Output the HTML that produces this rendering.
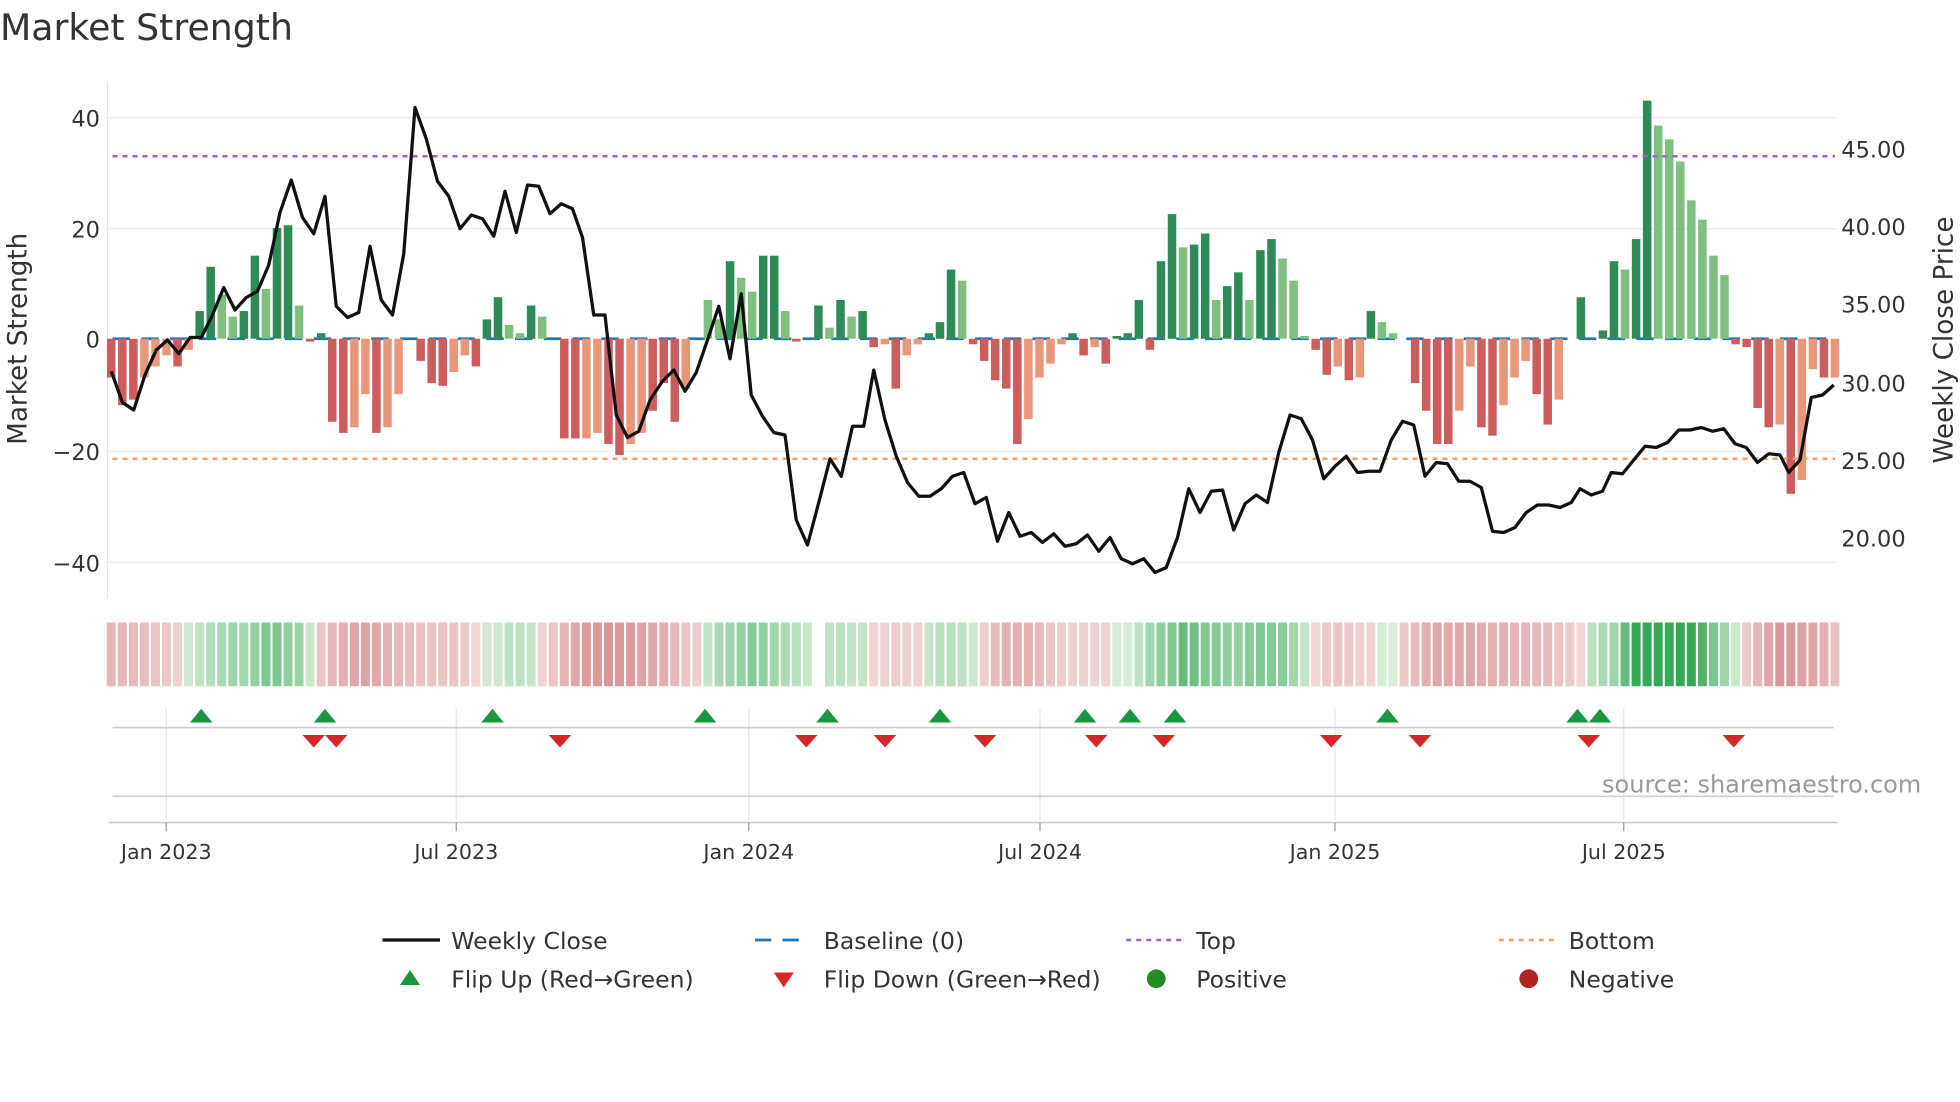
<!DOCTYPE html>
<html><head><meta charset="utf-8"><style>
html,body{margin:0;padding:0;background:#fff;width:1960px;height:1102px;overflow:hidden}
svg{display:block}
text{font-family:"DejaVu Sans","Liberation Sans",sans-serif}
</style></head><body>
<svg id="s" width="1960" height="1102" viewBox="0 0 1568 881.6" xmlns="http://www.w3.org/2000/svg">
<text x="0" y="32" font-size="29" fill="#333">Market Strength</text>
<g stroke="#ececf0" stroke-width="1">
<line x1="86" y1="94" x2="1470" y2="94"/><line x1="86" y1="183" x2="1470" y2="183"/>
<line x1="86" y1="361" x2="1470" y2="361"/><line x1="86" y1="450" x2="1470" y2="450"/>
</g>
<line x1="86" y1="65" x2="86" y2="478" stroke="#e4e4e4"/>
<g font-size="18" fill="#333" text-anchor="end">
<text x="80" y="101">40</text><text x="80" y="190">20</text><text x="80" y="278">0</text>
<text x="80" y="368">−20</text><text x="80" y="457">−40</text>
</g>
<g font-size="18" fill="#333">
<text x="1473" y="126">45.00</text><text x="1473" y="188">40.00</text><text x="1473" y="250">35.00</text>
<text x="1473" y="313">30.00</text><text x="1473" y="375">25.00</text><text x="1473" y="437">20.00</text>
</g>
<text transform="translate(21,271) rotate(-90)" font-size="21" fill="#333" text-anchor="middle">Market Strength</text>
<text transform="translate(1562,272) rotate(-90)" font-size="21" fill="#333" text-anchor="middle">Weekly Close Price</text>
<line x1="90" y1="271" x2="1468" y2="271" stroke="#1f77b4" stroke-width="2.2" stroke-dasharray="14 9"/>
<g id="bars"></g>
<line x1="90" y1="125" x2="1468" y2="125" stroke="#9b5fd6" stroke-width="2" stroke-dasharray="4 4"/>
<line x1="90" y1="367" x2="1468" y2="367" stroke="#f0a060" stroke-width="2" stroke-dasharray="4 4"/>
<polyline id="ln" fill="none" stroke="#111" stroke-width="2.6" stroke-linejoin="round"/>
<g id="heat"></g>
<g stroke="#e6e6e6"><line x1="133" y1="567" x2="133" y2="656"/><line x1="365" y1="567" x2="365" y2="656"/><line x1="599" y1="567" x2="599" y2="656"/><line x1="832" y1="567" x2="832" y2="656"/><line x1="1068" y1="567" x2="1068" y2="656"/><line x1="1299" y1="567" x2="1299" y2="656"/></g>
<line x1="90" y1="582" x2="1467" y2="582" stroke="#ccc" stroke-width="1.3"/>
<line x1="90" y1="637" x2="1467" y2="637" stroke="#ccc" stroke-width="1.3"/>
<line x1="87" y1="658" x2="1470" y2="658" stroke="#ccc" stroke-width="1.3"/>
<g stroke="#999"><line x1="133" y1="658" x2="133" y2="665"/><line x1="365" y1="658" x2="365" y2="665"/><line x1="599" y1="658" x2="599" y2="665"/><line x1="832" y1="658" x2="832" y2="665"/><line x1="1068" y1="658" x2="1068" y2="665"/><line x1="1299" y1="658" x2="1299" y2="665"/></g>
<g id="mk"></g>
<text x="1537" y="634" font-size="19.2" fill="#999" text-anchor="end">source: sharemaestro.com</text>
<g font-size="16.5" fill="#333" text-anchor="middle">
<text x="133" y="687">Jan 2023</text><text x="365" y="687">Jul 2023</text><text x="599" y="687">Jan 2024</text>
<text x="832" y="687">Jul 2024</text><text x="1068" y="687">Jan 2025</text><text x="1299" y="687">Jul 2025</text>
</g>
<g font-size="18.8" fill="#333">
<line x1="306" y1="752" x2="352" y2="752" stroke="#111" stroke-width="2.6"/><text x="361" y="759">Weekly Close</text>
<line x1="604" y1="752" x2="646" y2="752" stroke="#1f77b4" stroke-width="2.2" stroke-dasharray="13 9"/><text x="659" y="759">Baseline (0)</text>
<line x1="901" y1="752" x2="945" y2="752" stroke="#9b5fd6" stroke-width="2" stroke-dasharray="4 4"/><text x="957" y="759">Top</text>
<line x1="1199" y1="752" x2="1243" y2="752" stroke="#f0a060" stroke-width="2" stroke-dasharray="4 4"/><text x="1255" y="759">Bottom</text>
<polygon points="320,788 336,788 328,776" fill="#1a9641"/><text x="361" y="790">Flip Up (Red→Green)</text>
<polygon points="619,778 635,778 627,790" fill="#d62728"/><text x="659" y="790">Flip Down (Green→Red)</text>
<circle cx="925" cy="783" r="7.5" fill="#228b22"/><text x="957" y="790">Positive</text>
<circle cx="1223" cy="783" r="7.5" fill="#b22222"/><text x="1255" y="790">Negative</text>
</g>
</svg>
<script>
var N='http://www.w3.org/2000/svg';
function el(t,a,p){var e=document.createElementNS(N,t);for(var k in a)e.setAttribute(k,a[k]);document.getElementById(p).appendChild(e);return e;}
var d="-7R -12R -11R -7S -5S -3S -5R -2S 5D 13D 8L 4L 5D 15D 9L 20D 20.5D 6L -0.5R 1D -15R -17R -16S -10S -17R -16S -10S 0 -4R -8R -8.5R -6S -3S -5R 3.5D 7.5D 2.5L 1L 6D 4L 0 -18R -18R -18S -17S -19R -21R -19S -17S -13R -8R -15R -9S 0 7L 3.5L 14D 11L 8.5L 15D 15D 5L -0.5R 0 6D 2L 7D 4L 5D -1.5R -1S -9R -3S -1S 1D 3D 12.5D 10.5L -1R -4R -7.5R -9R -19R -14.5S -7S -4.5S -1S 1D -3R -1.5S -4.5R 0.5D 1D 7D -2R 14D 22.5D 16.5L 17D 19D 7L 9.5D 12D 7L 16D 18D 14.5L 10.5L 0.5L -2R -6.5R -5S -7.5R -7S 5D 3L 1L 0 -8R -13R -19R -19R -13S -5S -16R -17.5R -12S -7S -4S -10R -15.5R -11S 0 7.5D 0 1.5D 14D 12.5L 18D 43D 38.5L 36L 32L 25L 21.5L 15L 11.5L -1R -1.5R -12.5R -16R -15.5S -28R -25.5S -5.5S -7R -7S".split(' ');
var n=d.length,x0=89,x1=1468,st=(x1-x0)/(n-1);
var C={D:'#2e8b57',L:'#7fbf7f',R:'#cd5c5c',S:'#e9967a'};
d.forEach(function(s,i){var v=parseFloat(s),c=s.slice(-1);if(!C[c])c='D';var x=x0+i*st,h=Math.abs(v)*4.43;if(h<0.1)return;
el('rect',{x:x-3.4,y:v>0?271-h:271,width:6.8,height:h,fill:C[c]},'bars');
});
for(var i=0;i<n;i++){var x=x0+i*st;if(Math.abs(x-652)<5)continue;
var a=0,k=0;for(var j=Math.max(0,i-2);j<=Math.min(n-1,i+2);j++){a+=parseFloat(d[j]);k++;}a/=k;
var t=Math.min(1,Math.abs(a)/25),col;
if(a>=0){var r=Math.round(215-t*160),g=Math.round(238-t*70),b=Math.round(215-t*130);col='rgb('+r+','+g+','+b+')';}
else{var r=Math.round(242-t*30),g=Math.round(215-t*85),b=Math.round(215-t*85);col='rgb('+r+','+g+','+b+')';}
el('rect',{x:x-3.6,y:498,width:7.2,height:51,fill:col},'heat');}
var L="89,297 98,322 107,328 116,300 125,280 134,272 143,283 152,270 161,270 170,252 179,230 188,248 197,238 206,233 215,212 224,170 233,144 242,174 251,187 260,157 269,245 278,254 287,250 296,197 305,240 314,252 323,203 332,86 341,111 350,145 359,157 368,183 377,172 386,175 395,189 404,153 413,186 422,148 431,149 440,171 449,163 458,167 466,190 475,252 484,252 493,332 502,350 511,345 520,320 530,305 539,296 548,313 557,298 566,272 575,245 584,287 593,235 601,316 610,333 619,346 628,348 637,416 646,436 655,402 664,367 673,381 682,341 691,341 699,296 708,336 717,365 726,386 735,397 744,397 753,391 762,381 771,378 780,403 789,398 798,433 807,410 816,429 825,426 834,434 843,427 852,437 861,435 870,428 879,441 888,430 897,447 906,451 915,447 924,458 933,454 942,430 951,391 960,410 969,393 978,392 987,424 996,403 1005,396 1014,402 1023,362 1032,332 1041,335 1050,352 1059,383 1068,373 1077,365 1086,378 1095,377 1104,377 1113,352 1122,337 1131,340 1140,381 1149,370 1158,371 1167,385 1176,385 1185,390 1194,425 1203,426 1212,422 1221,410 1230,404 1239,404 1248,406 1257,402 1264,391 1273,396 1282,393 1289,378 1298,379 1307,368 1316,357 1325,358 1334,354 1343,344 1352,344 1361,342 1370,345 1379,343 1388,355 1397,358 1406,370 1415,363 1424,364 1431,378 1440,368 1449,318 1458,316 1467,308";
document.getElementById('ln').setAttribute('points',L);
[161,260,394,564,662,752,868,904,940,1110,1262,1280].forEach(function(x){el('polygon',{points:(x-9)+',578 '+(x+9)+',578 '+x+',567',fill:'#1a9641'},'mk');});
[251,269,448,645,708,788,877,931,1065,1136,1271,1387].forEach(function(x){el('polygon',{points:(x-9)+',588 '+(x+9)+',588 '+x+',598',fill:'#d62728'},'mk');});
</script>
</body></html>
